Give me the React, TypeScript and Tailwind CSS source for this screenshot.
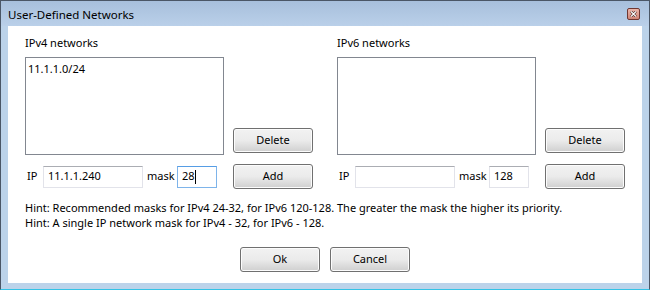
import React from 'react';

const font = { fontFamily: '"Noto Sans", "Open Sans", sans-serif' };

function Button({ label }: { label: string }) {
  return (
    <div className="w-[80px] h-[25px] rounded-[3px] border border-[#707070] bg-gradient-to-b from-[#f2f2f2] via-[#ebebeb] to-[#cfcfcf] shadow-[inset_0_0_0_1px_#fcfcfc] flex items-center justify-center text-[11px] text-black">
      {label}
    </div>
  );
}

function TextBox({ value, width, focused }: { value: string; width: string; focused?: boolean }) {
  return (
    <div
      className={
        width +
        ' h-[22px] flex items-center pl-[4px] text-[11px] text-black bg-white border ' +
        (focused
          ? 'border-[#7eb4ea] border-t-[#569de5]'
          : 'border-[#e2e3ea] border-t-[#abadb3]')
      }
    >
      {value}
      {focused && <span className="inline-block w-px h-[14px] bg-black" />}
    </div>
  );
}

function NetworkColumn({ title, items, ip, mask, focused }: { title: string; items: string[]; ip: string; mask: string; focused?: boolean }) {
  return (
    <div className="w-[288px] flex flex-col">
      <div className="h-[16px] leading-[16px] text-[11px] text-black">{title}</div>
      <div className="flex mt-[6px]">
        <div className="w-[199px] h-[98px] border border-[#828790] bg-white px-[2px] pt-[3px] text-[11px] leading-[16px] text-black">
          {items.map((it) => (
            <div key={it}>{it}</div>
          ))}
        </div>
        <div className="ml-auto flex flex-col justify-end pb-[2px]">
          <Button label="Delete" />
        </div>
      </div>
      <div className="flex items-center mt-[9px] h-[25px] text-[11px] text-black">
        <span className="w-[18px] pl-[2px]">IP</span>
        <TextBox value={ip} width="w-[100px]" />
        <span className="w-[34px] pl-[4px]">mask</span>
        <TextBox value={mask} width="w-[40px]" focused={focused} />
        <div className="ml-auto">
          <Button label="Add" />
        </div>
      </div>
    </div>
  );
}

export default function App() {
  return (
    <div className="w-[650px] h-[290px] flex flex-col bg-[#bcd3ea] border-l border-t border-r border-[#4a5666] border-b border-b-[#33c3e6]" style={font}>
      {/* Title bar */}
      <div className="h-[25px] flex items-center pl-[7px] pr-[9px] pt-[2px] bg-gradient-to-b from-[#a7bfdc] to-[#bad0e9]">
        <span className="text-[11.5px] text-black">User-Defined Networks</span>
        <div className="ml-auto mb-[2px] w-[13px] h-[12px] rounded-[2px] border border-[#6f3731] bg-gradient-to-b from-[#eab5aa] to-[#cf8577] flex items-center justify-center">
          <svg width="7" height="6" viewBox="0 0 7 6">
            <path d="M1 0.5 L6 5.5 M6 0.5 L1 5.5" stroke="#3a1f1c" strokeWidth="2.4" />
            <path d="M1 0.5 L6 5.5 M6 0.5 L1 5.5" stroke="#ffffff" strokeWidth="1.2" />
          </svg>
        </div>
      </div>

      {/* Client area */}
      <div className="flex-1 mx-[7px] mb-[6px] bg-white flex flex-col pl-[17px] pt-[9px]">
        <div className="flex gap-[24px]">
          <NetworkColumn title="IPv4 networks" items={['11.1.1.0/24']} ip="11.1.1.240" mask="28" focused />
          <NetworkColumn title="IPv6 networks" items={[]} ip="" mask="128" />
        </div>
        <div className="mt-[11px] text-[11px] leading-[15px] text-black">
          <div>Hint: Recommended masks for IPv4 24-32, for IPv6 120-128. The greater the mask the higher its priority.</div>
          <div>Hint: A single IP network mask for IPv4 - 32, for IPv6 - 128.</div>
        </div>
        <div className="mt-[17px] flex justify-center gap-[10px] pr-[17px]">
          <Button label="Ok" />
          <Button label="Cancel" />
        </div>
      </div>
    </div>
  );
}
